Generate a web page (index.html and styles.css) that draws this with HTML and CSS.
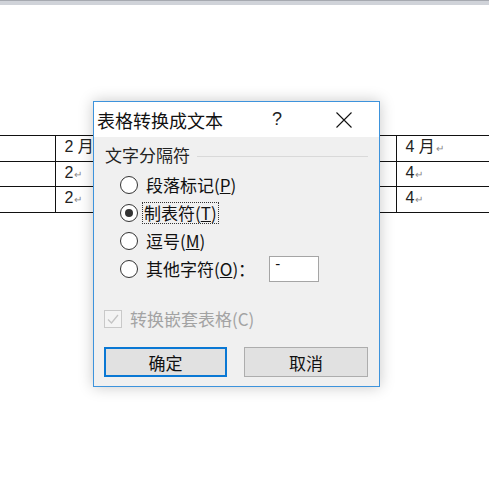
FILE: index.html
```html
<!DOCTYPE html>
<html lang="zh-CN">
<head>
<meta charset="utf-8">
<title>表格转换成文本</title>
<link rel="stylesheet" href="styles.css">
</head>
<body>
<div class="topbar"></div>
<div class="page">
  <table class="doc-table">
    <tr><td class="c1"></td><td class="c2">2 月<span class="pm">↵</span></td><td class="c3"></td><td class="c4"></td><td class="c5">4 月<span class="pm">↵</span></td></tr>
    <tr><td class="c1"></td><td class="c2">2<span class="pm">↵</span></td><td class="c3"></td><td class="c4"></td><td class="c5">4<span class="pm">↵</span></td></tr>
    <tr><td class="c1"></td><td class="c2">2<span class="pm">↵</span></td><td class="c3"></td><td class="c4"></td><td class="c5">4<span class="pm">↵</span></td></tr>
  </table>
</div>

<div class="dialog">
  <div class="titlebar">
    <span class="title">表格转换成文本</span>
    <span class="help">?</span>
    <span class="close">
      <svg width="16" height="16" viewBox="0 0 16 16"><path d="M0.5 0.5 L15.5 15.5 M15.5 0.5 L0.5 15.5" stroke="#111" stroke-width="1.1" fill="none"/></svg>
    </span>
  </div>
  <div class="body">
    <div class="group-head">
      <span class="group-label">文字分隔符</span>
      <span class="group-line"></span>
    </div>
    <div class="radios">
      <div class="radio-row"><span class="radio"></span><span class="rlabel">段落标记(<u>P</u>)</span></div>
      <div class="radio-row"><span class="radio checked"></span><span class="rlabel focus">制表符(<u>T</u>)</span></div>
      <div class="radio-row"><span class="radio"></span><span class="rlabel">逗号(<u>M</u>)</span></div>
      <div class="radio-row"><span class="radio"></span><span class="rlabel">其他字符(<u>O</u>)：</span><span class="textbox">-</span></div>
    </div>
    <div class="check-row">
      <span class="checkbox">
        <svg width="14" height="14" viewBox="0 0 14 14"><path d="M2 7.5 L5.5 11 L12 3" stroke="#c4c4c4" stroke-width="1.3" fill="none"/></svg>
      </span>
      <span class="clabel">转换嵌套表格(C)</span>
    </div>
    <div class="buttons">
      <span class="btn primary">确定</span>
      <span class="btn">取消</span>
    </div>
  </div>
</div>
</body>
</html>
```

FILE: styles.css
```css
* { box-sizing: border-box; }
html, body { margin: 0; padding: 0; }
body {
  width: 489px;
  height: 502px;
  overflow: hidden;
  background: #fff;
  font-family: "Noto Sans CJK SC", "Noto Sans", sans-serif;
  position: relative;
}
.topbar {
  height: 5px;
  background: #d0d3d9;
  border-top: 1px solid #a6a9b0;
}
.page {
  padding-top: 130px;
}
.doc-table {
  border-collapse: collapse;
  table-layout: fixed;
  width: 489px;
}
.doc-table td {
  height: 25.5px;
  border: 1px solid #111;
  padding: 0 0 0 9px;
  font-family: "Liberation Sans", "Noto Sans CJK SC", sans-serif;
  font-size: 16px;
  line-height: 22px;
  color: #222;
  white-space: nowrap;
  overflow: hidden;
  vertical-align: middle;
}
.doc-table td.c1 { width: 55px; border-left: none; }
.doc-table td.c2 { width: 170px; }
.doc-table td.c3 { width: 100px; }
.doc-table td.c4 { width: 71px; }
.doc-table td.c5 { width: 93px; border-right: none; }
.pm {
  font-size: 10px;
  color: #888;
  margin-left: 1px;
}

.dialog {
  position: absolute;
  left: 93px;
  top: 101px;
  width: 287px;
  height: 286px;
  border: 1px solid #3d93dc;
  background: #f0f0f0;
  box-shadow: 0 0 14px rgba(0, 0, 0, 0.22);
  display: flex;
  flex-direction: column;
}
.titlebar {
  height: 35px;
  background: #fff;
  display: flex;
  align-items: center;
  padding-left: 3px;
}
.title {
  font-size: 18px;
  line-height: 22px;
  color: #111;
  width: 175px;
}
.help {
  font-family: "Liberation Sans", sans-serif;
  font-size: 18px;
  color: #222;
  width: 64px;
}
.close {
  display: flex;
  align-items: center;
}
.body {
  flex: 1;
  display: flex;
  flex-direction: column;
  padding: 8px 11px 0 10px;
}
.group-head {
  display: flex;
  align-items: center;
  height: 20px;
}
.group-label {
  font-size: 17px;
  line-height: 20px;
  color: #222;
  padding-left: 1px;
}
.group-line {
  flex: 1;
  height: 1px;
  background: #d9d9d9;
  margin-left: 7px;
  margin-top: 2px;
}
.radios {
  margin-top: 6px;
  display: flex;
  flex-direction: column;
}
.radio-row {
  height: 28px;
  display: flex;
  align-items: center;
  padding-left: 16px;
}
.radio {
  width: 18px;
  height: 18px;
  border: 1px solid #333;
  border-radius: 50%;
  background: #fff;
  display: flex;
  align-items: center;
  justify-content: center;
}
.radio.checked::after {
  content: "";
  width: 8px;
  height: 8px;
  border-radius: 50%;
  background: #333;
}
.rlabel {
  font-size: 17px;
  line-height: 20px;
  color: #111;
  margin-left: 6px;
  padding: 0 1px;
  border: 1px solid transparent;
}
.rlabel.focus {
  border: 1px dotted #333;
  margin-left: 4px;
}
.textbox {
  width: 50px;
  height: 26px;
  margin-left: 12px;
  background: #fff;
  border: 1px solid #a5a5a5;
  font-family: "Liberation Sans", sans-serif;
  font-size: 15px;
  line-height: 14px;
  padding-left: 5px;
  color: #111;
}
.check-row {
  margin-top: 27px;
  display: flex;
  align-items: center;
  height: 18px;
}
.checkbox {
  width: 18px;
  height: 18px;
  border: 1px solid #c9c9c9;
  background: #f4f4f4;
  display: flex;
  align-items: center;
  justify-content: center;
}
.clabel {
  font-size: 17px;
  line-height: 20px;
  color: #a3a3a3;
  margin-left: 8px;
}
.buttons {
  margin-top: 19px;
  display: flex;
  gap: 17px;
}
.btn {
  width: 124px;
  height: 30px;
  background: #e1e1e1;
  border: 1px solid #adadad;
  display: flex;
  align-items: center;
  justify-content: center;
  font-size: 17px;
  color: #111;
}
.btn.primary {
  width: 123px;
  border: 2px solid #0a78d4;
}
```
